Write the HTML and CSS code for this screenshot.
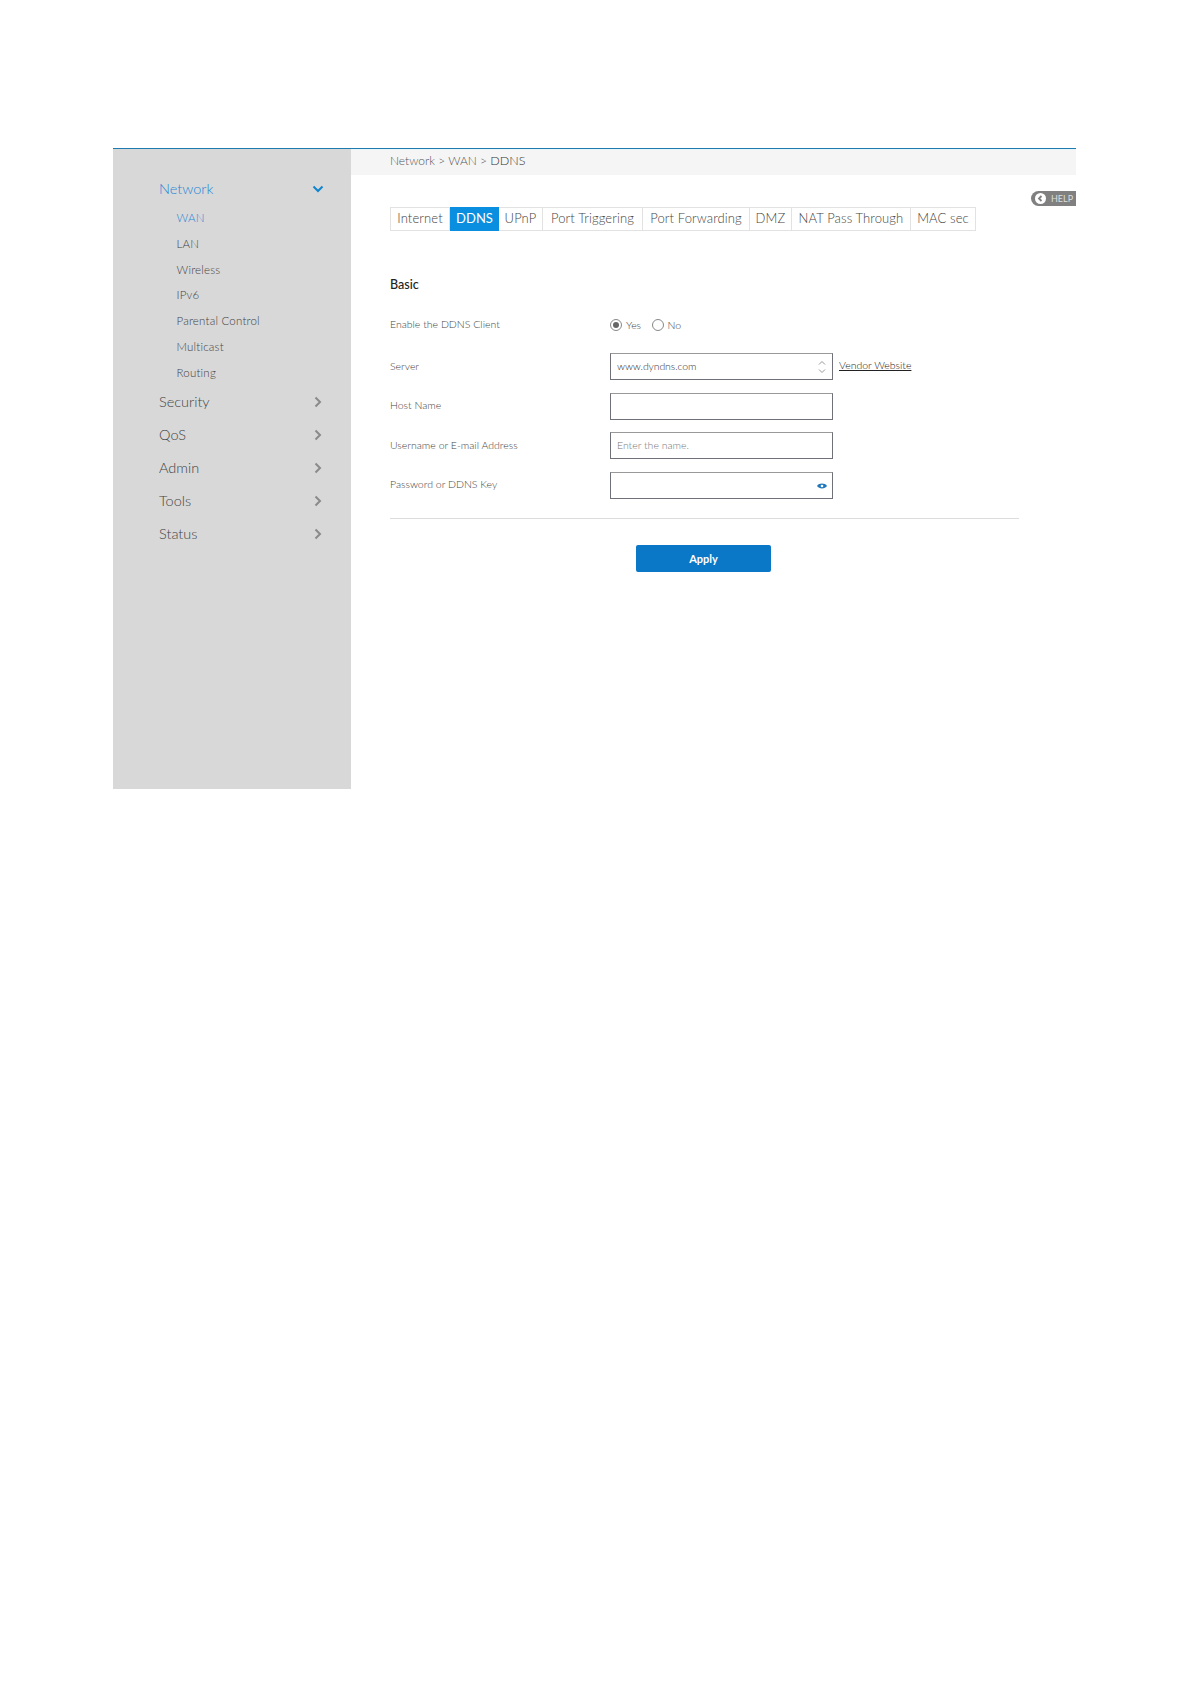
FILE: index.html
```html
<!DOCTYPE html>
<html lang="en">
<head>
<meta charset="utf-8">
<title>DDNS</title>
<link rel="stylesheet" href="styles.css">
</head>
<body>
<div class="frame">
  <nav class="sidebar">
    <div class="nav-head active"><span>Network</span>
      <svg class="chev" width="12" height="12" viewBox="0 0 12 12"><path d="M1.500 3.500 6 8l4.500-4.500" fill="none" stroke="#0f85d0" stroke-width="2"/></svg>
    </div>
    <ul class="subnav">
      <li class="active">WAN</li>
      <li>LAN</li>
      <li>Wireless</li>
      <li>IPv6</li>
      <li>Parental Control</li>
      <li>Multicast</li>
      <li>Routing</li>
    </ul>
    <div class="nav-head"><span>Security</span><svg class="chev" width="12" height="12" viewBox="0 0 12 12"><path d="M3.500 1.500 8 6l-4.500 4.500" fill="none" stroke="#8a8a8a" stroke-width="2"/></svg></div>
    <div class="nav-head"><span>QoS</span><svg class="chev" width="12" height="12" viewBox="0 0 12 12"><path d="M3.500 1.500 8 6l-4.500 4.500" fill="none" stroke="#8a8a8a" stroke-width="2"/></svg></div>
    <div class="nav-head"><span>Admin</span><svg class="chev" width="12" height="12" viewBox="0 0 12 12"><path d="M3.500 1.500 8 6l-4.500 4.500" fill="none" stroke="#8a8a8a" stroke-width="2"/></svg></div>
    <div class="nav-head"><span>Tools</span><svg class="chev" width="12" height="12" viewBox="0 0 12 12"><path d="M3.500 1.500 8 6l-4.500 4.500" fill="none" stroke="#8a8a8a" stroke-width="2"/></svg></div>
    <div class="nav-head"><span>Status</span><svg class="chev" width="12" height="12" viewBox="0 0 12 12"><path d="M3.500 1.500 8 6l-4.500 4.500" fill="none" stroke="#8a8a8a" stroke-width="2"/></svg></div>
  </nav>
  <main class="content">
    <div class="crumbs">Network &gt; WAN &gt; <span class="crumb-last">DDNS</span></div>
    <div class="help">
      <svg width="11" height="11" viewBox="0 0 11 11"><circle cx="5.500" cy="5.500" r="5.500" fill="#fff"/><path d="M6.500 3 4 5.500 6.500 8" fill="none" stroke="#808080" stroke-width="1.800"/></svg>
      <span>HELP</span>
    </div>
    <div class="tabs">
      <div class="tab t1">Internet</div>
      <div class="tab t2 on">DDNS</div>
      <div class="tab t3">UPnP</div>
      <div class="tab t4">Port Triggering</div>
      <div class="tab t5">Port Forwarding</div>
      <div class="tab t6">DMZ</div>
      <div class="tab t7">NAT Pass Through</div>
      <div class="tab t8">MAC sec</div>
    </div>
    <h2 class="section">Basic</h2>
    <div class="form">
      <div class="row r-radio">
        <label class="lbl">Enable the DDNS Client</label>
        <div class="radios">
          <span class="radio checked"></span><span class="opt">Yes</span>
          <span class="radio second"></span><span class="opt">No</span>
        </div>
      </div>
      <div class="row">
        <label class="lbl">Server</label>
        <div class="field"><span class="val">www.dyndns.com</span>
          <svg class="spin" width="8" height="14" viewBox="0 0 8 14"><path d="M1 4.500 4 1.500l3 3M1 9.500l3 3 3-3" fill="none" stroke="#999" stroke-width="1"/></svg>
        </div>
        <a class="vendor">Vendor Website</a>
      </div>
      <div class="row">
        <label class="lbl">Host Name</label>
        <div class="field"></div>
      </div>
      <div class="row">
        <label class="lbl">Username or E-mail Address</label>
        <div class="field"><span class="ph">Enter the name.</span></div>
      </div>
      <div class="row">
        <label class="lbl">Password or DDNS Key</label>
        <div class="field">
          <svg class="eye" width="10" height="8" viewBox="0 0 10 8"><path d="M0 4C2 .8 8 .8 10 4 8 7.200 2 7.200 0 4Z" fill="#1f78bd"/><circle cx="5" cy="4" r="1.300" fill="#fff"/></svg>
        </div>
      </div>
    </div>
    <hr class="divider">
    <button class="apply" type="button">Apply</button>
  </main>
</div>
</body>
</html>
```
FILE: styles.css
```css
* { box-sizing: border-box; }
html, body { margin: 0; padding: 0; background: #fff; }
body { height: 1684px; padding: 148px 114px 0 113px; font-family: Lato, "Open Sans", sans-serif; color: #555; }
.frame { display: flex; height: 641px; border-top: 1px solid #1d7bb0; }
.sidebar { width: 238px; flex: none; background: #d8d8d8; padding: 26px 27px 0 46px; }
.nav-head { display: flex; justify-content: space-between; align-items: center; height: 33px; font-size: 14.500px; font-weight: 300; color: #444; }
.nav-head.active { color: #1f86d6; height: 26px; }
.chev { display: block; }
.nav-head.active .chev { margin-top: 2px; }
.subnav { list-style: none; margin: 4px 0 -0.400px; padding: 0 0 0 17.500px; }
.subnav li { height: 25.800px; line-height: 25.800px; font-size: 11.500px; font-weight: 300; color: #444; letter-spacing: .2px; }
.subnav li.active { color: #1f86d6; }
.content { flex: 1; position: relative; padding: 0 57px 0 39px; }
.crumbs { margin: 0 -57px 0 -39px; padding: 0 0 0 39px; height: 26px; line-height: 21px; background: #f5f5f5; font-size: 12px; font-weight: 300; color: #555; border-top: 1px solid #e6f6fb; }
.crumb-last { color: #333; font-size: 12.500px; }
.help { position: absolute; right: 0; top: 42px; width: 45px; height: 15px; display: flex; align-items: center; gap: 5px; padding-left: 4px; background: #808080; border-radius: 8px 0 0 8px; font-size: 9px; color: #ddd; }
.help svg { flex: none; }
.tabs { display: flex; height: 24px; margin-top: 32px; border: 1px solid #e2e2e2; width: 586px; }
.tab { height: 22px; line-height: 21px; font-size: 13px; font-weight: 300; letter-spacing: .12px; text-align: center; color: #444; border-right: 1px solid #e2e2e2; }
.tab:last-child { border-right: 0; }
.tab.on { background: #0a8fe0; color: #fff; font-weight: 400; letter-spacing: 0; height: 24px; margin-top: -1px; line-height: 23px; border-right: 0; }
.t1 { width: 59px; } .t2 { width: 49px; } .t3 { width: 44px; } .t4 { width: 100px; }
.t5 { width: 107px; } .t6 { width: 42px; } .t7 { width: 119px; } .t8 { width: 64px; }
.section { margin: 45px 0 0; height: 18px; line-height: 18px; font-size: 12.500px; font-weight: 500; color: #222; }
.form { margin-top: 21px; }
.row { display: flex; align-items: center; height: 27px; margin-bottom: 12.670px; }
.row.r-radio { height: 20px; margin-bottom: 18px; }
.lbl { width: 220px; flex: none; padding-bottom: 2px; font-size: 10.500px; color: #444; font-weight: 300; }
.radios { display: flex; align-items: center; font-size: 10.500px; font-weight: 300; color: #444; }
.radio { width: 12px; height: 12px; border: 1px solid #888; border-radius: 50%; background: #fff; margin-right: 4px; display: flex; align-items: center; justify-content: center; }
.radio.checked::after { content: ""; width: 6px; height: 6px; border-radius: 50%; background: #666; }
.radio.second { margin-left: 10.500px; }
.field { width: 223px; height: 27px; flex: none; display: flex; align-items: center; justify-content: space-between; padding: 0 6px; border: 1px solid #6f7078; border-top-color: #999; background: #fff; font-size: 10.500px; font-weight: 300; position: relative; }
.val { color: #333; letter-spacing: -.1px; padding-bottom: 1px; }
.ph { color: #777; padding-bottom: 1px; }
.spin { margin-left: auto; }
.eye { margin: 2px -1px 0 auto; }
.vendor { margin-left: 6px; padding-bottom: 3px; font-size: 10.500px; font-weight: 300; color: #222; text-decoration: underline; }
.divider { height: 1px; border: 0; margin: 19px 0 0; background: #dcdcdc; }
.apply { display: block; width: 135px; height: 27px; margin: 26px 0 0 246px; border: 0; border-radius: 2px; background: #0a78c6; color: #fff; font: 700 11px Lato, "Open Sans", sans-serif; }
```
